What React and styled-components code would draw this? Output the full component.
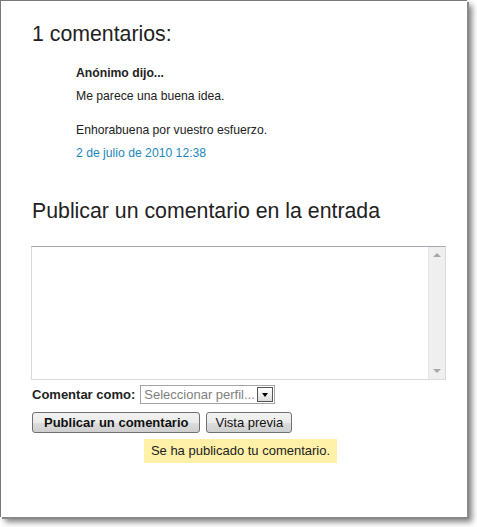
import React from 'react';
import styled, { createGlobalStyle } from 'styled-components';

const GlobalStyle = createGlobalStyle`
  html, body {
    margin: 0;
    padding: 0;
    background: #ffffff;
  }
  body {
    font-family: "Liberation Sans", Arial, sans-serif;
    color: #222222;
  }
`;

export default function App() {
  return (
    <>
      <GlobalStyle />
      <Page>
        <Window>
          <Heading>1 comentarios:</Heading>
          <Comment>
            <Author>Anónimo dijo...</Author>
            <Body>
              Me parece una buena idea.
              <br />
              <br />
              Enhorabuena por vuestro esfuerzo.
            </Body>
            <DateLink href="#">2 de julio de 2010 12:38</DateLink>
          </Comment>

          <Heading $top={36}>Publicar un comentario en la entrada</Heading>

          <Editor>
            <TextArea aria-label="Comentario" />
            <Scrollbar>
              <Arrow $up />
              <Arrow />
            </Scrollbar>
          </Editor>

          <ProfileRow>
            <Label>Comentar como:</Label>
            <Select>
              <SelectText>Seleccionar perfil...</SelectText>
              <SelectButton>
                <Caret />
              </SelectButton>
            </Select>
          </ProfileRow>

          <Buttons>
            <Button $bold>Publicar un comentario</Button>
            <Button>Vista previa</Button>
          </Buttons>

          <Notice>Se ha publicado tu comentario.</Notice>
        </Window>
      </Page>
    </>
  );
}

const Page = styled.div`
  width: 477px;
  height: 527px;
  overflow: hidden;
`;

const Window = styled.div`
  box-sizing: border-box;
  width: 467px;
  height: 517px;
  display: flex;
  flex-direction: column;
  align-items: flex-start;
  padding: 20px 20px 0 30px;
  background: #ffffff;
  border-top: 1px solid #7a7a7a;
  border-left: 1px solid #7a7a7a;
  box-shadow: 2px 2px 0 #8a8a8a, 5px 5px 6px rgba(0, 0, 0, 0.5);
`;

const Heading = styled.h2`
  margin: ${(p) => p.$top || 0}px 0 0 1px;
  font-size: 21.3px;
  font-weight: normal;
  line-height: 26px;
  color: #222222;
`;

const Comment = styled.div`
  display: flex;
  flex-direction: column;
  gap: 6px;
  margin: 18px 0 0 45px;
  font-size: 12.2px;
  line-height: 17px;
  color: #222222;
`;

const Author = styled.div`
  font-weight: bold;
`;

const Body = styled.div``;

const DateLink = styled.a`
  color: #2288bb;
  text-decoration: none;
`;

const Editor = styled.div`
  box-sizing: border-box;
  margin-top: 22px;
  width: 415px;
  height: 134px;
  display: flex;
  border: 1px solid #dadada;
  border-top-color: #a8a8b0;
  background: #ffffff;
`;

const TextArea = styled.textarea`
  flex: 1;
  border: none;
  outline: none;
  resize: none;
  margin: 0;
  padding: 2px;
  font: 13px "Liberation Sans", Arial, sans-serif;
  background: transparent;
`;

const Scrollbar = styled.div`
  width: 16px;
  display: flex;
  flex-direction: column;
  justify-content: space-between;
  align-items: center;
  padding: 6px 0;
  background: #efefef;
  border-left: 1px solid #e4e4e4;
`;

const Arrow = styled.span`
  width: 0;
  height: 0;
  border-left: 4px solid transparent;
  border-right: 4px solid transparent;
  ${(p) =>
    p.$up
      ? 'border-bottom: 4px solid #a8a8a8;'
      : 'border-top: 4px solid #a8a8a8;'}
`;

const ProfileRow = styled.div`
  display: flex;
  align-items: center;
  gap: 5px;
  margin: 5px 0 0 1px;
  font-size: 13px;
`;

const Label = styled.span`
  font-weight: bold;
  color: #222222;
`;

const Select = styled.div`
  box-sizing: border-box;
  display: flex;
  align-items: center;
  width: 135px;
  height: 19px;
  border: 1px solid #a5a5a5;
  background: #ffffff;
`;

const SelectText = styled.span`
  flex: 1;
  padding-left: 3px;
  color: #808080;
  white-space: nowrap;
  overflow: hidden;
`;

const SelectButton = styled.span`
  box-sizing: border-box;
  width: 16px;
  height: 15px;
  margin-right: 1px;
  display: flex;
  align-items: center;
  justify-content: center;
  border: 1px solid #555555;
  background: linear-gradient(#ffffff, #dcdcdc);
`;

const Caret = styled.span`
  width: 0;
  height: 0;
  border-left: 3.5px solid transparent;
  border-right: 3.5px solid transparent;
  border-top: 4px solid #000000;
`;

const Buttons = styled.div`
  display: flex;
  gap: 6px;
  margin: 8px 0 0 1px;
`;

const Button = styled.button`
  box-sizing: border-box;
  height: 21px;
  padding: 0 ${(p) => (p.$bold ? 11 : 8)}px;
  font: ${(p) => (p.$bold ? 'bold' : 'normal')} 13px "Liberation Sans", Arial, sans-serif;
  color: #111111;
  border: 1px solid #707070;
  border-radius: 3px;
  background: linear-gradient(#f2f2f2 0%, #ebebeb 50%, #dddddd 51%, #cfcfcf 100%);
  cursor: pointer;
`;

const Notice = styled.div`
  align-self: center;
  margin: 6px 0 0 3px;
  padding: 0 7px;
  height: 24px;
  line-height: 24px;
  font-size: 13px;
  color: #222222;
  background: #fff1a8;
`;
